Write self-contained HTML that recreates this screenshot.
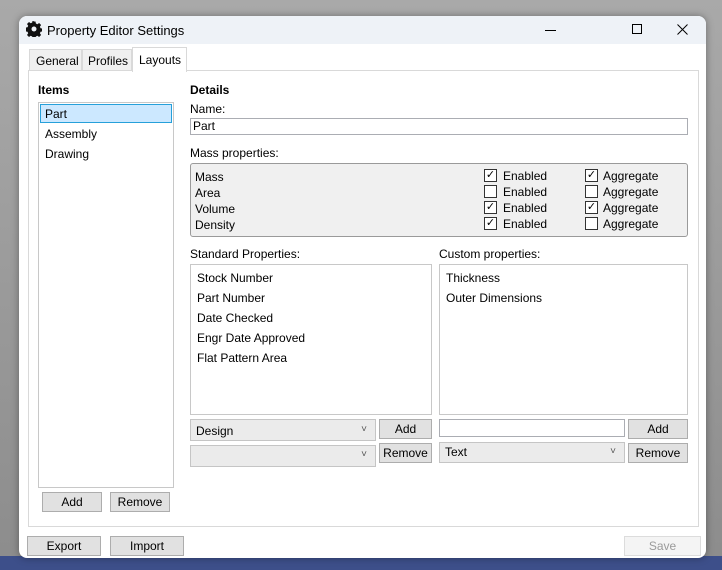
<!DOCTYPE html><html><head><style>
*{box-sizing:border-box}
body{margin:0;width:722px;height:570px;overflow:hidden;background:linear-gradient(180deg,#a9a9a9,#8c8c8c);font-family:"Liberation Sans",sans-serif;font-size:12px;color:#000;position:relative}
.a{position:absolute}
.win{left:19px;top:16px;width:687px;height:542px;background:#fff;border-radius:8px;overflow:hidden;box-shadow:0 0 8px rgba(0,0,0,.35)}
.tb{left:0;top:0;width:687px;height:28px;background:#eef2f7}
.btn{position:absolute;background:#e1e1e1;border:1px solid #adadad;text-align:center;line-height:18px;font-size:12px}
.box{position:absolute;border:1px solid #abadb3;background:#fff}
.cb{position:absolute;width:13px;height:13px;border:1px solid #333;background:#fff;font-size:11px;line-height:11px;text-align:center}
.cmb{position:absolute;background:#ebebeb;border:1px solid #c5c5c5;padding-left:5px;line-height:19px}
.cmb:after{content:"˅";position:absolute;right:8px;top:-1px;font-size:10px;color:#555}
</style></head><body>
<div class="a" style="left:0;top:556px;width:722px;height:14px;background:#3d4f8a"></div>
<div class="a win">
 <div class="a tb"></div>
 <svg class="a" style="left:7px;top:5px" width="16" height="16" viewBox="0 0 16 16"><path d="M8 0.5l1.5 0 .4 2 1.5.7 1.7-1.2 2 2-1.2 1.7.7 1.5 2 .4v2.8l-2 .4-.7 1.5 1.2 1.7-2 2-1.7-1.2-1.5.7-.4 2H6.6l-.4-2-1.5-.7-1.7 1.2-2-2 1.2-1.7-.7-1.5-2-.4V6.6l2-.4.7-1.5-1.2-1.7 2-2 1.7 1.2 1.5-.7.4-2z" fill="#111"/><circle cx="8" cy="8" r="2.5" fill="#eef2f7"/></svg>
 <div class="a" style="left:28px;top:7px;font-size:13px">Property Editor Settings</div>
 <div class="a" style="left:526px;top:14px;width:11px;height:1px;background:#000"></div>
 <div class="a" style="left:613px;top:8px;width:10px;height:10px;border:1px solid #000"></div>
 <svg class="a" style="left:658px;top:8px" width="11" height="11"><path d="M0.5 0.5L10.5 10.5M10.5 0.5L0.5 10.5" stroke="#000" stroke-width="1"/></svg>
 <div class="a" style="left:9px;top:54px;width:671px;height:457px;border:1px solid #d9d9d9"></div>
 <div class="a" style="left:10px;top:33px;width:53px;height:22px;background:#f0f0f0;border:1px solid #d9d9d9;padding:4px 0 0 6px">General</div>
 <div class="a" style="left:63px;top:33px;width:50px;height:22px;background:#f0f0f0;border:1px solid #d9d9d9;padding:4px 0 0 5px">Profiles</div>
 <div class="a" style="left:113px;top:31px;width:55px;height:25px;background:#fff;border:1px solid #d9d9d9;border-bottom:none;padding:5px 0 0 6px">Layouts</div>
 <div class="a" style="left:19px;top:67px;font-weight:bold">Items</div>
 <div class="box" style="left:19px;top:86px;width:136px;height:386px;border-color:#c8c8c8"></div>
 <div class="a" style="left:21px;top:88px;width:132px;height:19px;background:#cce8ff;border:1px solid #26a0da;padding:2px 4px">Part</div>
 <div class="a" style="left:26px;top:111px">Assembly</div>
 <div class="a" style="left:26px;top:131px">Drawing</div>
 <div class="btn" style="left:23px;top:476px;width:60px;height:20px">Add</div>
 <div class="btn" style="left:91px;top:476px;width:60px;height:20px">Remove</div>
 <div class="a" style="left:171px;top:67px;font-weight:bold">Details</div>
 <div class="a" style="left:171px;top:86px">Name:</div>
 <div class="box" style="left:171px;top:102px;width:498px;height:17px;padding-left:2px;line-height:15px">Part</div>
 <div class="a" style="left:171px;top:130px">Mass properties:</div>
 <div class="a" style="left:171px;top:147px;width:498px;height:74px;background:#f0f0f0;border:1px solid #9a9a9a;border-radius:3px"></div>
 <div class="a" style="left:176px;top:153px;line-height:16px">Mass<br>Area<br>Volume<br>Density</div>
 <div class="cb" style="left:465px;top:153px">✓</div><div class="cb" style="left:465px;top:169px"></div><div class="cb" style="left:465px;top:185px">✓</div><div class="cb" style="left:465px;top:201px">✓</div>
 <div class="a" style="left:484px;top:152px;line-height:16px">Enabled<br>Enabled<br>Enabled<br>Enabled</div>
 <div class="cb" style="left:566px;top:153px">✓</div><div class="cb" style="left:566px;top:169px"></div><div class="cb" style="left:566px;top:185px">✓</div><div class="cb" style="left:566px;top:201px"></div>
 <div class="a" style="left:584px;top:152px;line-height:16px">Aggregate<br>Aggregate<br>Aggregate<br>Aggregate</div>
 <div class="a" style="left:171px;top:231px">Standard Properties:</div>
 <div class="a" style="left:420px;top:231px">Custom properties:</div>
 <div class="box" style="left:171px;top:248px;width:242px;height:151px;border-color:#c8c8c8;padding:3px 6px;line-height:20px">Stock Number<br>Part Number<br>Date Checked<br>Engr Date Approved<br>Flat Pattern Area</div>
 <div class="box" style="left:420px;top:248px;width:249px;height:151px;border-color:#c8c8c8;padding:3px 6px;line-height:20px">Thickness<br>Outer Dimensions</div>
 <div class="cmb" style="left:171px;top:403px;width:186px;height:22px;line-height:22px">Design</div>
 <div class="btn" style="left:360px;top:403px;width:53px;height:20px">Add</div>
 <div class="cmb" style="left:171px;top:429px;width:186px;height:22px"></div>
 <div class="btn" style="left:360px;top:427px;width:53px;height:20px">Remove</div>
 <div class="box" style="left:420px;top:403px;width:186px;height:18px"></div>
 <div class="btn" style="left:609px;top:403px;width:60px;height:20px">Add</div>
 <div class="cmb" style="left:420px;top:426px;width:186px;height:21px">Text</div>
 <div class="btn" style="left:609px;top:427px;width:60px;height:20px">Remove</div>
 <div class="btn" style="left:8px;top:520px;width:74px;height:20px">Export</div>
 <div class="btn" style="left:91px;top:520px;width:74px;height:20px">Import</div>
 <div class="btn" style="left:605px;top:520px;width:77px;height:20px;background:#f4f4f4;border-color:#dcdcdc;color:#9a9a9a">Save</div>
</div>
</body></html>
